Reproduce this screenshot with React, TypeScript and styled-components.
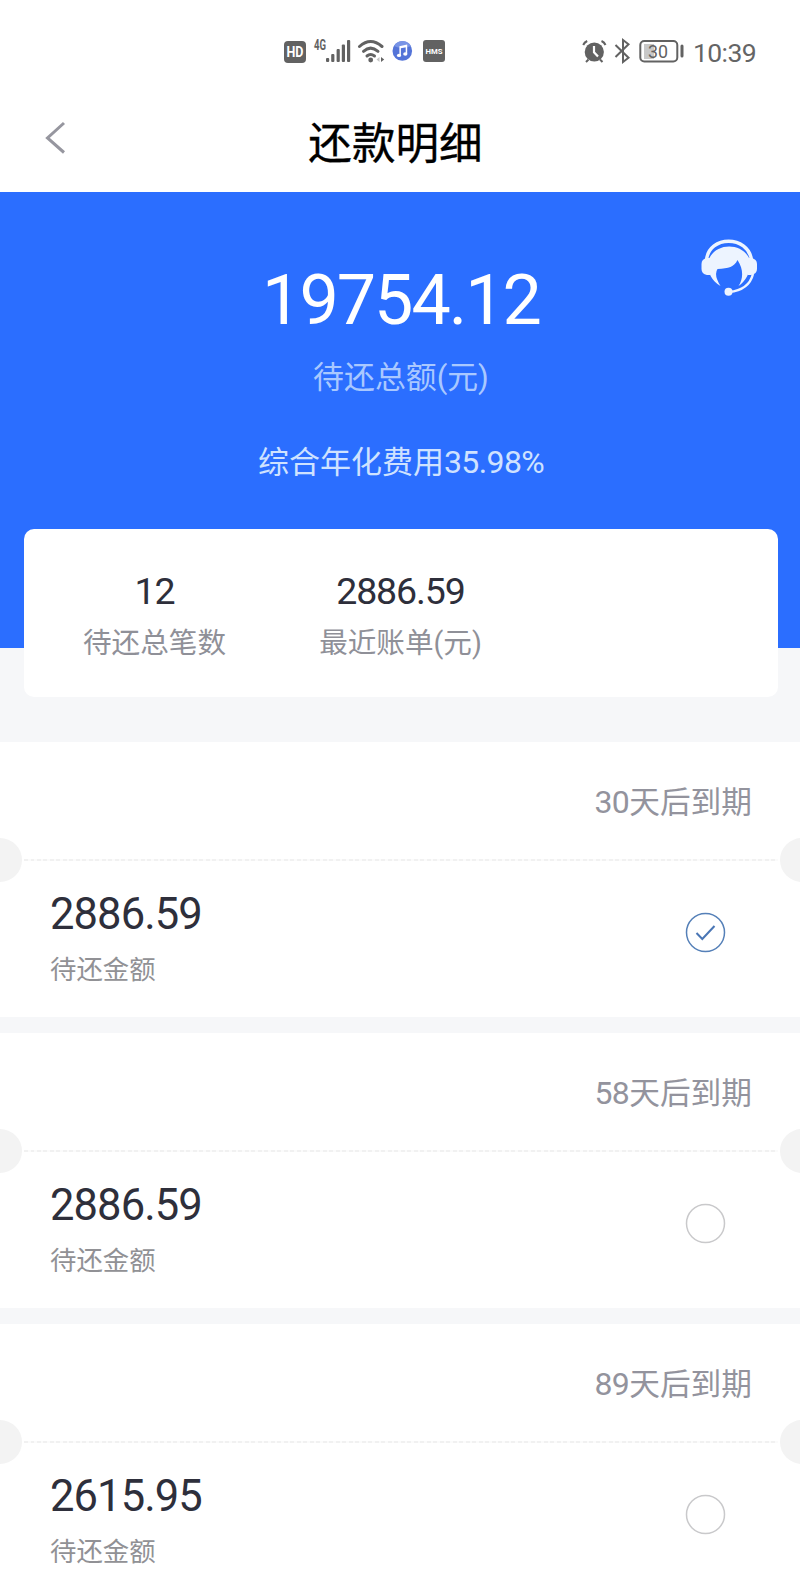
import React from "react";
import styled, { createGlobalStyle } from "styled-components";

const Global = createGlobalStyle`
  * { box-sizing: border-box; }
  body { margin: 0; background: #fff; font-family: Roboto, "Noto Sans CJK SC", sans-serif; }
`;

const Page = styled.div`
  width: 800px;
  height: 1590px;
  overflow: hidden;
  display: flex;
  flex-direction: column;
  background: #f6f7f9;
`;

const StatusBar = styled.div`
  flex: none;
  height: 92px;
  padding: 12px 44px 0 283px;
  display: flex;
  align-items: center;
  justify-content: space-between;
  background: #fff;
`;

const Clock = styled.span`
  font-size: 26.5px;
  line-height: 30px;
  letter-spacing: -0.6px;
  color: #656565;
  margin: 1px 0 0 8px;
`;

const StatusGroup = styled.div`
  display: flex;
  align-items: center;
`;

const NavBar = styled.header`
  flex: none;
  height: 100px;
  padding: 0 45px;
  display: grid;
  grid-template-columns: 22px 1fr 22px;
  align-items: center;
  background: #fff;
`;

const BackIcon = styled.svg`
  margin-top: -8px;
`;

const Title = styled.h1`
  margin: 6px 9px 0 0;
  font-size: 43.6px;
  line-height: 60px;
  font-weight: 400;
  color: #000;
  text-align: center;
  -webkit-text-stroke: 0.3px #000;
`;

const Hero = styled.section`
  flex: none;
  height: 456px;
  padding-top: 70px;
  display: flex;
  flex-direction: column;
  align-items: center;
  background: #2b6eff;
  position: relative;
`;

const ServiceIcon = styled.svg`
  position: absolute;
  left: 700px;
  top: 46px;
`;

const Total = styled.div`
  font-size: 70px;
  line-height: 76px;
  letter-spacing: -2px;
  color: #fff;
  margin-left: 2px;
`;

const HeroLabel = styled.div`
  margin: 20px 0 0 2px;
  font-size: 30.9px;
  line-height: 40px;
  color: #a9c8ff;
`;

const Rate = styled.div`
  margin: 44px 0 0 2px;
  font-size: 31px;
  line-height: 40px;
  color: #cfe2ff;
`;

const Digits = styled.span<{ $size: number }>`
  font-size: ${(p) => p.$size}px;
  letter-spacing: -0.6px;
`;

const Summary = styled.section`
  flex: none;
  height: 168px;
  margin: -119px 22px 45px 24px;
  padding-top: 41px;
  display: grid;
  grid-template-columns: 261px 231px 1fr;
  align-items: start;
  background: #fff;
  border-radius: 10px;
  position: relative;
`;

const Stat = styled.div`
  display: flex;
  flex-direction: column;
  align-items: center;
  gap: 11px;
`;

const StatValue = styled.div`
  font-size: 37.5px;
  line-height: 42px;
  letter-spacing: -1.1px;
  color: #2e2f3b;
`;

const StatLabel = styled.div`
  font-size: 28.6px;
  line-height: 40px;
  color: #8f9098;
`;

const Bill = styled.article`
  flex: none;
  height: 275px;
  margin-bottom: 16px;
  background: #fff;
`;

const Due = styled.div`
  height: 117px;
  padding: 40px 48px 0 0;
  text-align: right;
  font-size: 30.7px;
  line-height: 40px;
  color: #93939d;
`;

const Tear = styled.div`
  height: 1px;
  display: flex;
  align-items: center;
  justify-content: space-between;
`;

const Notch = styled.i<{ $right?: boolean }>`
  flex: none;
  width: 22px;
  height: 44px;
  background: #f3f3f3;
  border-radius: ${(p) => (p.$right ? "22px 0 0 22px" : "0 22px 22px 0")};
  margin-right: ${(p) => (p.$right ? "-2px" : "0")};
`;

const Dash = styled.i`
  flex: 1;
  height: 2px;
  margin: 1px 2px 0;
  background: repeating-linear-gradient(90deg, #f1f1f1 0 4px, #fbfbfb 4px 6.5px);
`;

const BillBody = styled.div`
  display: flex;
  justify-content: space-between;
  padding: 31px 74px 0 50px;
`;

const Amount = styled.div`
  font-size: 43.5px;
  line-height: 48px;
  letter-spacing: -0.9px;
  color: #2e2f3b;
`;

const AmountLabel = styled.div`
  margin-top: 11px;
  font-size: 26.4px;
  line-height: 40px;
  color: #919195;
`;

const Radio = styled.svg`
  margin-top: 21px;
`;

const bills = [
  { days: "30", amount: "2886.59", checked: true },
  { days: "58", amount: "2886.59", checked: false },
  { days: "89", amount: "2615.95", checked: false },
];

const SignalIcons = () => (
  <svg width="166" height="30" viewBox="283 37 166 30" fill="#626262">
    <rect x="284" y="41" width="22" height="22" rx="4" />
    <text x="295" y="57.3" fontSize="14" fontWeight="700" textAnchor="middle" fill="#fff" textLength="17" lengthAdjust="spacingAndGlyphs">HD</text>
    <text x="314" y="50" fontSize="14" fontWeight="700" textLength="12" lengthAdjust="spacingAndGlyphs">4G</text>
    <rect x="326" y="58" width="3.2" height="4" rx="1" />
    <rect x="331.2" y="54" width="3.2" height="8" rx="1" />
    <rect x="336.6" y="49" width="3.2" height="13" rx="1" />
    <rect x="341.8" y="44.5" width="3.2" height="17.5" rx="1" />
    <rect x="347" y="40" width="3.2" height="22" rx="1" />
    <g fill="none" stroke="#626262" strokeWidth="3" strokeLinecap="round">
      <path d="M359.5 46.5Q370.5 36.5 382 46.5" />
      <path d="M363.5 51.3Q370.5 45 378 51.3" />
      <path d="M367 56Q370.5 53 374.5 56" />
    </g>
    <circle cx="370.7" cy="60" r="2.4" />
    <path d="M379.5 57v5l-3-2.5z" fill="#c4c4c4" />
    <path d="M381 57v5l3.2-2.5z" />
    <circle cx="402.3" cy="51" r="9.8" fill="#5474d8" />
    <path d="M394 46A9.8 9.8 0 0 1 411 46Q402 50 394 46" fill="#7894e6" />
    <g fill="#fff">
      <path d="M399.4 46.2l7.8-1.6v9.2h-1.5v-6.6l-4.8 1v7h-1.5z" />
      <ellipse cx="399" cy="55.4" rx="2.1" ry="1.7" />
      <ellipse cx="405.3" cy="54" rx="2.1" ry="1.7" />
    </g>
    <rect x="423" y="40" width="22" height="22" rx="3" />
    <text x="434" y="54" fontSize="7.5" fontWeight="700" textAnchor="middle" fill="#fff" textLength="17" lengthAdjust="spacingAndGlyphs">HMS</text>
  </svg>
);

const PowerIcons = () => (
  <svg width="104" height="30" viewBox="582 37 104 30" fill="none" stroke="#626262" strokeWidth="2">
    <circle cx="595.3" cy="52" r="9.6" fill="#626262" stroke="none" />
    <path d="M584.2 45Q585.4 42.3 588.2 41M602.5 41Q605.4 42.3 606.5 45M589.5 59.500l-2.5 2.500M601 59.500l2.5 2.500" />
    <path d="M595 46v6.300l4 4.300" stroke="#fff" strokeWidth="2.2" />
    <path d="M616.5 45l13 12.700-5.500 4.300V40l5.500 4.300L616.5 57" />
    <rect x="641.3" y="41" width="37" height="20.5" rx="4" />
    <rect x="645" y="44" width="10" height="15" fill="#c8c8c8" stroke="none" />
    <path d="M683 46v10" strokeWidth="3" strokeLinecap="round" />
    <text x="659" y="58" fontSize="19" textAnchor="middle" fill="#626262" stroke="none" textLength="20" lengthAdjust="spacingAndGlyphs">30</text>
  </svg>
);

const RadioMark = ({ checked }: { checked: boolean }) => (
  <Radio width="41" height="41" viewBox="0 0 41 41" fill="none">
    <circle cx="20.5" cy="20.5" r="19" stroke={checked ? "#5580b8" : "#c9c9cb"} strokeWidth="1.5" />
    {checked && <path d="M11.5 21l5.8 6L29.5 14" stroke="#4a76b5" strokeWidth="2" />}
  </Radio>
);

export default function App() {
  return (
    <Page>
      <Global />
      <StatusBar>
        <SignalIcons />
        <StatusGroup>
          <PowerIcons />
          <Clock>10:39</Clock>
        </StatusGroup>
      </StatusBar>
      <NavBar>
        <BackIcon width="22" height="34" viewBox="0 0 22 34" fill="none">
          <path d="M19 2L2.5 17L19 31.5" stroke="#96969f" strokeWidth="3" />
        </BackIcon>
        <Title>还款明细</Title>
      </NavBar>
      <Hero>
        <ServiceIcon width="60" height="60" viewBox="700 238 60 60" fill="none">
          <path d="M706.5 260C709 235 748 235 751.5 260" stroke="#edf4ff" strokeWidth="3.4" />
          <path d="M707 258h3v17h-3q-5.500-1-5.500-6v-5q0-5 5.500-6zM751 258h-3v17h3q6-1 6-6v-5q0-5-6-6z" fill="#edf4ff" />
          <path d="M720.500 286C711 280 707 271 708 263C711 243 742 240 750 260C752 270 746 281 738.500 286C743 279 744 270 737.500 260C734 267 729 268.500 717.500 269Q713.500 275 720.500 286z" fill="#edf4ff" />
          <path d="M753 274Q749 290 729 292" stroke="#edf4ff" strokeWidth="2.400" />
          <circle cx="728.5" cy="291.800" r="4" fill="#edf4ff" />
        </ServiceIcon>
        <Total>19754.12</Total>
        <HeroLabel>待还总额(元)</HeroLabel>
        <Rate>
          综合年化费用<Digits $size={32}>35.98%</Digits>
        </Rate>
      </Hero>
      <Summary>
        <Stat>
          <StatValue>12</StatValue>
          <StatLabel>待还总笔数</StatLabel>
        </Stat>
        <Stat>
          <StatValue>2886.59</StatValue>
          <StatLabel>最近账单(元)</StatLabel>
        </Stat>
      </Summary>
      {bills.map((b) => (
        <Bill key={b.days}>
          <Due>
            <Digits $size={32}>{b.days}</Digits>天后到期
          </Due>
          <Tear>
            <Notch />
            <Dash />
            <Notch $right />
          </Tear>
          <BillBody>
            <div>
              <Amount>{b.amount}</Amount>
              <AmountLabel>待还金额</AmountLabel>
            </div>
            <RadioMark checked={b.checked} />
          </BillBody>
        </Bill>
      ))}
    </Page>
  );
}
